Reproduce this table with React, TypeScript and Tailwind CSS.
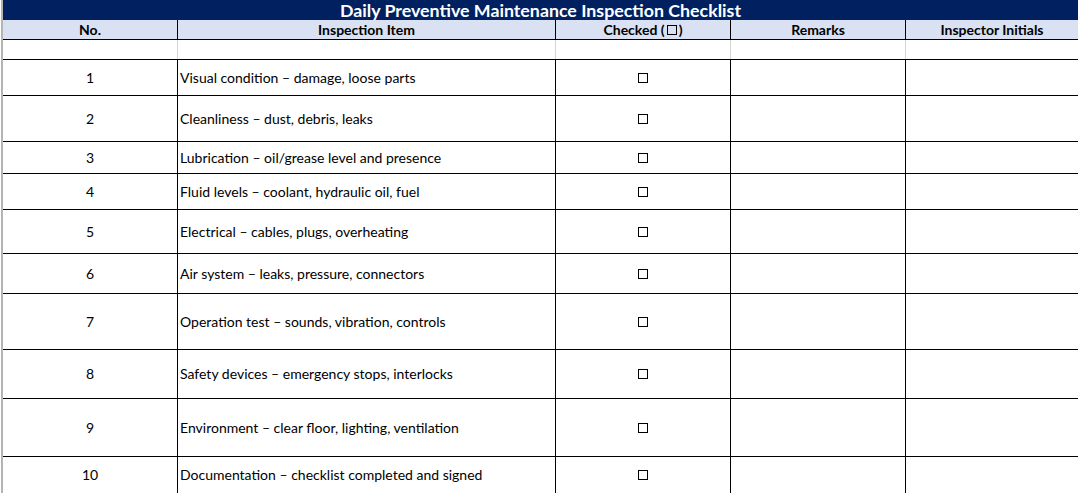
const rows: { no: number; item: string; h: string }[] = [
  { no: 1, item: 'Visual condition – damage, loose parts', h: 'h-[36px]' },
  { no: 2, item: 'Cleanliness – dust, debris, leaks', h: 'h-[46px]' },
  { no: 3, item: 'Lubrication – oil/grease level and presence', h: 'h-[32px]' },
  { no: 4, item: 'Fluid levels – coolant, hydraulic oil, fuel', h: 'h-[36px]' },
  { no: 5, item: 'Electrical – cables, plugs, overheating', h: 'h-[44px]' },
  { no: 6, item: 'Air system – leaks, pressure, connectors', h: 'h-[40px]' },
  { no: 7, item: 'Operation test – sounds, vibration, controls', h: 'h-[56px]' },
  { no: 8, item: 'Safety devices – emergency stops, interlocks', h: 'h-[49px]' },
  { no: 9, item: 'Environment – clear floor, lighting, ventilation', h: 'h-[58px]' },
  { no: 10, item: 'Documentation – checklist completed and signed', h: 'h-[40px] pb-[4px]' },
];

function Box() {
  return <span className="inline-block w-[10px] h-[10px] border border-black" />;
}

export default function App() {
  return (
    <div className="w-[1078px] h-[493px] overflow-hidden bg-white text-black font-['Lato','Liberation_Sans',sans-serif] text-[14px]">
      <div className="flex h-full">
        <div className="w-px shrink-0" />
        <div className="w-[2px] shrink-0 bg-[#b4b4b4]" />
        <div className="flex-1 flex flex-col">
          <div className="h-[20px] shrink-0 bg-[#002060] text-center text-white font-bold text-[17.8px] leading-[20px]">
            Daily Preventive Maintenance Inspection Checklist
          </div>

          <div className="h-[20px] shrink-0 flex bg-[#d9e1f2] border-b border-black font-bold text-[14px] leading-none">
            <div className="w-[175px] shrink-0 border-r border-black flex items-center justify-center">No.</div>
            <div className="w-[378px] shrink-0 border-r border-black flex items-center justify-center">Inspection Item</div>
            <div className="w-[175px] shrink-0 border-r border-black flex items-center justify-center gap-[2px]">
              Checked (<Box />)
            </div>
            <div className="w-[175px] shrink-0 border-r border-black flex items-center justify-center">Remarks</div>
            <div className="flex-1 flex items-center justify-center">Inspector Initials</div>
          </div>

          <div className="h-[20px] shrink-0 flex border-b border-black">
            <div className="w-[175px] shrink-0 border-r border-[#d4d4d4]" />
            <div className="w-[378px] shrink-0 border-r border-[#d4d4d4]" />
            <div className="w-[175px] shrink-0 border-r border-[#d4d4d4]" />
            <div className="w-[175px] shrink-0 border-r border-[#d4d4d4]" />
            <div className="flex-1" />
          </div>

          {rows.map((r) => (
            <div
              key={r.no}
              className={`${r.h} shrink-0 flex leading-none ${r.no === 10 ? '' : 'border-b border-black'}`}
            >
              <div className="w-[175px] shrink-0 border-r border-black flex items-center justify-center">{r.no}</div>
              <div className="w-[378px] shrink-0 border-r border-black flex items-center pl-[2px] whitespace-nowrap">{r.item}</div>
              <div className="w-[175px] shrink-0 border-r border-black flex items-center justify-center">
                <Box />
              </div>
              <div className="w-[175px] shrink-0 border-r border-black" />
              <div className="flex-1" />
            </div>
          ))}
        </div>
      </div>
    </div>
  );
}
